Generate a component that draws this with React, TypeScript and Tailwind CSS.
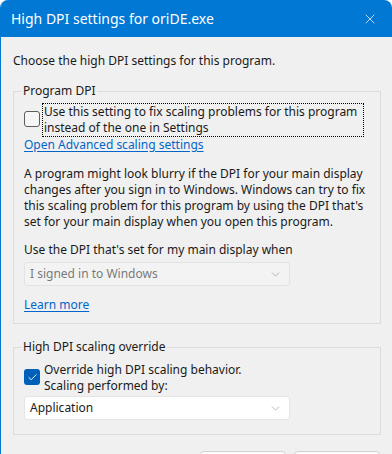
import { ChevronDown, X, Check } from "lucide-react";

const font = "font-['Segoe_UI','Noto_Sans',sans-serif]";

function Dropdown({ label, disabled }: { label: string; disabled?: boolean }) {
  return (
    <div
      className={
        "flex items-center justify-between w-[266px] h-[24px] pl-[5px] pr-[7px] rounded-[3px] border " +
        (disabled
          ? "bg-[#f3f3f3] border-[#e3e3e3] text-[#7a7a7a]"
          : "bg-white border-[#e5e5e5] text-[#1a1a1a]")
      }
    >
      <span>{label}</span>
      <ChevronDown size={13} strokeWidth={1.1} className="text-[#8a8a8a]" />
    </div>
  );
}

export default function App() {
  return (
    <div className={`${font} bg-white h-[454px] w-[392px] overflow-hidden text-[12px] leading-[16px]`}>
      {/* Window */}
      <div className="h-full rounded-tl-[8px] rounded-tr-[8px] border-l border-[#0078d4] bg-[#f0f0f0] overflow-hidden">
        {/* Title bar */}
        <header className="flex items-center justify-between h-[37px] bg-[#0078d4] pl-[10px] pr-[14px] text-white">
          <span className="text-[14px] leading-[20px]">High DPI settings for oriDE.exe</span>
          <X size={16} strokeWidth={1.1} />
        </header>

        {/* Body */}
        <div className="pl-[12px] pt-[16px] text-[#1a1a1a]">
          <p>Choose the high DPI settings for this program.</p>

          {/* Program DPI */}
          <fieldset className="mt-[14px] w-[368px] border border-[#dcdcdc] pl-[10px] pb-[10px]">
            <legend className="-ml-[2px] px-[1px]">Program DPI</legend>
            <div className="flex items-start mt-[4px]">
              <div className="mt-[8px] w-[16px] h-[16px] rounded-[3px] border border-[#5d5d5d] bg-[#f6f6f6]" />
              <div className="ml-[2px] w-[322px] border border-dotted border-black pl-[1px]">
                Use this setting to fix scaling problems for this program
                <br />
                instead of the one in Settings
              </div>
            </div>
            <a className="block text-[#0066cc] underline underline-offset-[2px]">
              Open Advanced scaling settings
            </a>
            <p className="mt-[13px] whitespace-nowrap">
              A program might look blurry if the DPI for your main display
              <br />
              changes after you sign in to Windows. Windows can try to fix
              <br />
              this scaling problem for this program by using the DPI that's
              <br />
              set for your main display when you open this program.
            </p>
            <p className="mt-[12px]">Use the DPI that's set for my main display when</p>
            <div className="mt-[4px]">
              <Dropdown label="I signed in to Windows" disabled />
            </div>
            <a className="block mt-[11px] text-[#0066cc] underline underline-offset-[2px]">Learn more</a>
          </fieldset>

          {/* High DPI scaling override */}
          <fieldset className="mt-[15px] w-[368px] border border-[#dcdcdc] pl-[10px] pb-[14px]">
            <legend className="-ml-[2px] px-[1px]">High DPI scaling override</legend>
            <div className="flex items-start mt-[6px]">
              <div className="mt-[8px] w-[16px] h-[16px] rounded-[3px] bg-[#005fb8] flex items-center justify-center">
                <Check size={11} strokeWidth={2} className="text-white" />
              </div>
              <div className="ml-[4px] pt-[1px]">
                Override high DPI scaling behavior.
                <br />
                Scaling performed by:
              </div>
            </div>
            <div className="mt-[2px]">
              <Dropdown label="Application" />
            </div>
          </fieldset>

          {/* Buttons */}
          <div className="flex gap-[8px] mt-[16px] pl-[187px]">
            <div className="w-[86px] h-[24px] rounded-[4px] border border-[#d0d0d0] bg-[#fdfdfd]" />
            <div className="w-[86px] h-[24px] rounded-[4px] border border-[#d0d0d0] bg-[#fdfdfd]" />
          </div>
        </div>
      </div>
    </div>
  );
}
